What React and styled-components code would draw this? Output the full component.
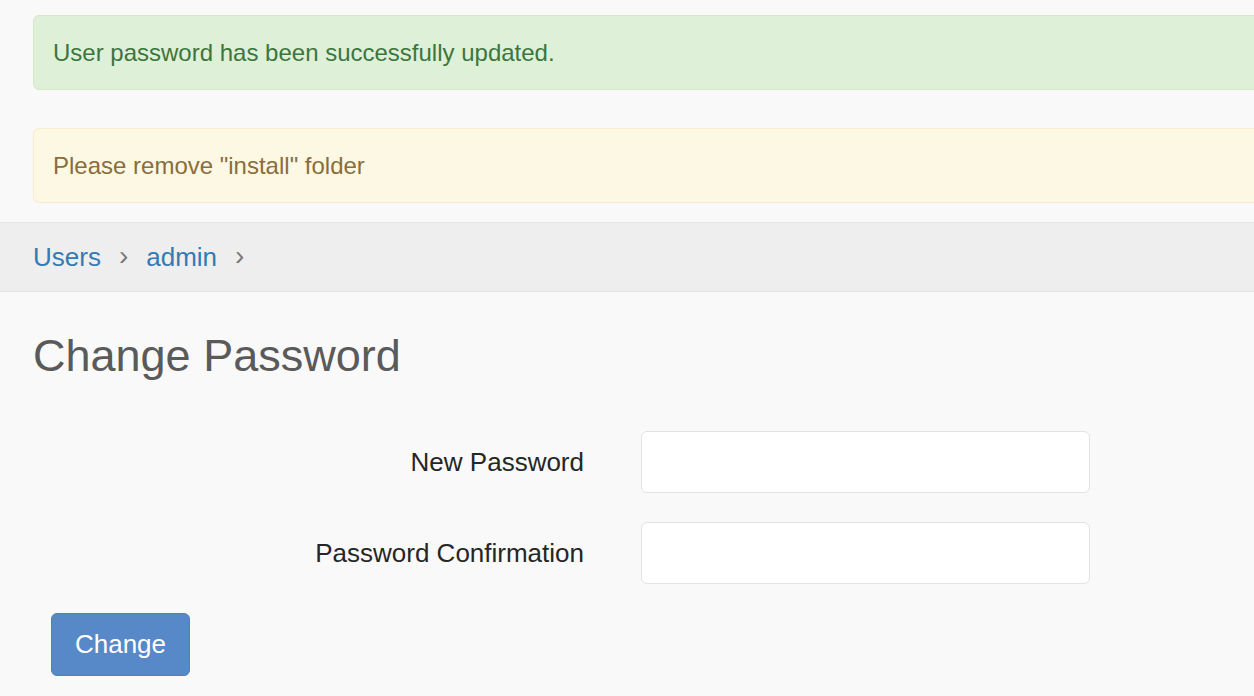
import React from "react";
import styled, { createGlobalStyle } from "styled-components";

const GlobalStyle = createGlobalStyle`
  html, body {
    margin: 0;
    padding: 0;
    background: #f9f9f9;
    overflow: hidden;
  }
  body {
    font-family: "Liberation Sans", Arial, sans-serif;
    color: #333;
  }
`;

const App = () => {
  return (
    <Page>
      <GlobalStyle />
      <Alerts>
        <Alert variant="success">User password has been successfully updated.</Alert>
        <Alert variant="warning">Please remove "install" folder</Alert>
      </Alerts>

      <Breadcrumb>
        <Crumb href="#">Users</Crumb>
        <Sep>›</Sep>
        <Crumb href="#">admin</Crumb>
        <Sep>›</Sep>
      </Breadcrumb>

      <Content>
        <Title>Change Password</Title>
        <Form>
          <Row>
            <Label>New Password</Label>
            <Input type="password" />
          </Row>
          <Row>
            <Label>Password Confirmation</Label>
            <Input type="password" />
          </Row>
          <Actions>
            <Button type="button">Change</Button>
          </Actions>
        </Form>
      </Content>
    </Page>
  );
};

export default App;

const alertColors = {
  success: { bg: "#dff0d8", border: "#d6e9c6", color: "#3c763d" },
  warning: { bg: "#fcf8e3", border: "#faebcc", color: "#8a6d3b" },
};

const Page = styled.div`
  width: 1254px;
  min-height: 696px;
`;

const Alerts = styled.div`
  display: flex;
  flex-direction: column;
  gap: 38px;
  padding: 15px 0 19px 33px;
`;

const Alert = styled.div`
  box-sizing: border-box;
  height: 75px;
  margin-right: -20px;
  padding: 0 19px;
  display: flex;
  align-items: center;
  font-size: 24px;
  background: ${(p) => alertColors[p.variant].bg};
  border: 1px solid ${(p) => alertColors[p.variant].border};
  color: ${(p) => alertColors[p.variant].color};
  border-radius: 6px;
`;

const Breadcrumb = styled.nav`
  box-sizing: border-box;
  height: 70px;
  display: flex;
  align-items: center;
  gap: 18px;
  padding: 0 33px;
  background: #eeeeee;
  border-top: 1px solid #e4e4e4;
  border-bottom: 1px solid #e4e4e4;
  font-size: 26px;
`;

const Crumb = styled.a`
  color: #337ab7;
  text-decoration: none;
`;

const Sep = styled.span`
  color: #777;
  font-size: 28px;
  line-height: 1;
  margin-top: -3px;
`;

const Content = styled.div`
  padding: 0 33px;
`;

const Title = styled.h1`
  margin: 37px 0 48px;
  font-size: 45px;
  font-weight: 400;
  line-height: 1.2;
  color: #5a5a5a;
`;

const Form = styled.form`
  display: flex;
  flex-direction: column;
  gap: 29px;
`;

const Row = styled.div`
  display: grid;
  grid-template-columns: 551px 449px;
  column-gap: 57px;
  align-items: center;
`;

const Label = styled.label`
  text-align: right;
  font-size: 26px;
  color: #262626;
`;

const Input = styled.input`
  box-sizing: border-box;
  height: 62px;
  background: #fff;
  border: 1px solid #e2e2e2;
  border-radius: 6px;
  font-size: 24px;
  padding: 0 16px;
  outline: none;
`;

const Actions = styled.div`
  padding-left: 18px;
`;

const Button = styled.button`
  box-sizing: border-box;
  width: 139px;
  height: 63px;
  background: #5788c8;
  border: 1px solid #4f7fbf;
  border-radius: 6px;
  color: #fff;
  font-family: "Liberation Sans", Arial, sans-serif;
  font-size: 26px;
  cursor: pointer;
`;
